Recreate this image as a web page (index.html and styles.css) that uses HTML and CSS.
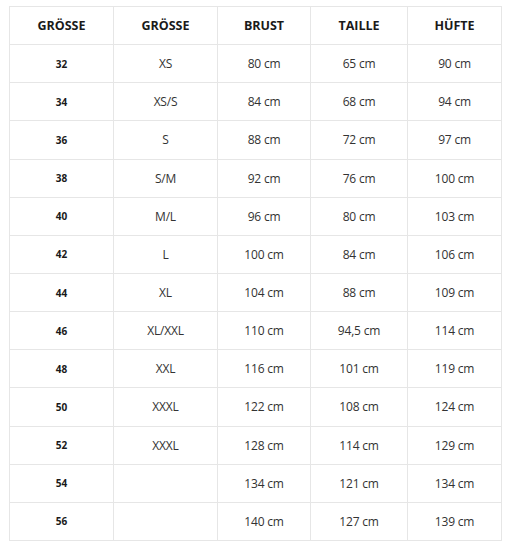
FILE: index.html
```html
<!DOCTYPE html>
<html lang="de">
<head>
<meta charset="utf-8">
<link rel="stylesheet" href="styles.css">
</head>
<body>
<table class="size-table">
  <colgroup>
    <col class="c1"><col class="c2"><col class="c3"><col class="c4"><col class="c5">
  </colgroup>
  <thead>
    <tr><th>GRÖSSE</th><th>GRÖSSE</th><th>BRUST</th><th>TAILLE</th><th>HÜFTE</th></tr>
  </thead>
  <tbody>
    <tr><td class="num">32</td><td>XS</td><td>80 cm</td><td>65 cm</td><td>90 cm</td></tr>
    <tr><td class="num">34</td><td>XS/S</td><td>84 cm</td><td>68 cm</td><td>94 cm</td></tr>
    <tr><td class="num">36</td><td>S</td><td>88 cm</td><td>72 cm</td><td>97 cm</td></tr>
    <tr><td class="num">38</td><td>S/M</td><td>92 cm</td><td>76 cm</td><td>100 cm</td></tr>
    <tr><td class="num">40</td><td>M/L</td><td>96 cm</td><td>80 cm</td><td>103 cm</td></tr>
    <tr><td class="num">42</td><td>L</td><td>100 cm</td><td>84 cm</td><td>106 cm</td></tr>
    <tr><td class="num">44</td><td>XL</td><td>104 cm</td><td>88 cm</td><td>109 cm</td></tr>
    <tr><td class="num">46</td><td>XL/XXL</td><td>110 cm</td><td>94,5 cm</td><td>114 cm</td></tr>
    <tr><td class="num">48</td><td>XXL</td><td>116 cm</td><td>101 cm</td><td>119 cm</td></tr>
    <tr><td class="num">50</td><td>XXXL</td><td>122 cm</td><td>108 cm</td><td>124 cm</td></tr>
    <tr><td class="num">52</td><td>XXXL</td><td>128 cm</td><td>114 cm</td><td>129 cm</td></tr>
    <tr><td class="num">54</td><td></td><td>134 cm</td><td>121 cm</td><td>134 cm</td></tr>
    <tr><td class="num">56</td><td></td><td>140 cm</td><td>127 cm</td><td>139 cm</td></tr>
  </tbody>
</table>
</body>
</html>
```

FILE: styles.css
```css
html, body {
  margin: 0;
  padding: 0;
  background: #ffffff;
}

body {
  padding: 6px 0 0 9px;
  font-family: "Open Sans", "Noto Sans", "Liberation Sans", sans-serif;
}

.size-table {
  border-collapse: collapse;
  table-layout: fixed;
  width: 493px;
}

.c1 { width: 104px; }
.c2 { width: 104px; }
.c3 { width: 93px; }
.c4 { width: 97px; }
.c5 { width: 94px; }

.size-table th,
.size-table td {
  border: 1px solid #e6e6e6;
  text-align: center;
  vertical-align: middle;
  padding: 0;
  height: 38.15px;
  box-sizing: border-box;
}

.size-table th {
  font-size: 12.5px;
  font-weight: 700;
  color: #1a1a1a;
}

.size-table td {
  font-size: 12px;
  font-weight: 400;
  color: #333333;
  letter-spacing: -0.2px;
}

.size-table td.num {
  font-size: 10px;
  font-weight: 700;
  color: #1a1a1a;
  letter-spacing: 0;
}
```
